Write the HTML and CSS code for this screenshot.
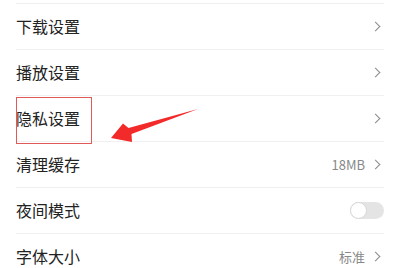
FILE: index.html
```html
<!DOCTYPE html>
<html lang="zh-CN">
<head>
    <meta charset="UTF-8">
    <meta name="viewport" content="width=device-width, initial-scale=1.0">
    <title>设置</title>
    <link rel="stylesheet" href="styles.css">
</head>
<body>
    <div class="settings">
        <div class="row">
            <span class="label">下载设置</span>
            <span class="chevron"></span>
        </div>
        <div class="row">
            <span class="label">播放设置</span>
            <span class="chevron"></span>
        </div>
        <div class="row">
            <span class="label">隐私设置</span>
            <span class="chevron"></span>
        </div>
        <div class="row">
            <span class="label">清理缓存</span>
            <span class="value">18MB</span>
            <span class="chevron"></span>
        </div>
        <div class="row">
            <span class="label">夜间模式</span>
            <span class="toggle"><span class="knob"></span></span>
        </div>
        <div class="row">
            <span class="label">字体大小</span>
            <span class="value">标准</span>
            <span class="chevron"></span>
        </div>
    </div>

    <!-- annotation: box + arrow over the privacy row -->
    <div class="mark-box"></div>
    <svg class="mark-arrow" width="400" height="268" viewBox="0 0 400 268">
        <polygon points="111,138 123,123.5 128.5,128 198,109 131.5,134 132,142" fill="#f22a2a"/>
    </svg>
</body>
</html>
```

FILE: styles.css
```css
body {
    margin: 0;
    padding: 0;
    background: #fff;
    font-family: "Noto Sans CJK SC", "Noto Sans", sans-serif;
    overflow: hidden;
    height: 268px;
    position: relative;
}
.settings {
    padding-top: 3px;
}
.row {
    display: flex;
    align-items: center;
    height: 45px;
    margin-left: 16px;
    margin-right: 16px;
    border-top: 1px solid #f0f0f0;
}
.label {
    flex: 1;
    font-size: 16px;
    color: #222;
    margin-top: -1px;
}
.value {
    font-size: 13px;
    color: #888;
    margin-right: 7px;
}
.chevron {
    width: 6px;
    height: 6px;
    border-top: 1.3px solid #8a8a8a;
    border-right: 1.3px solid #8a8a8a;
    transform: rotate(45deg);
    margin-right: 5px;
}
.toggle {
    width: 34px;
    height: 17px;
    border-radius: 9px;
    background: #e4e4e4;
    position: relative;
}
.knob {
    position: absolute;
    left: 0;
    top: 0;
    width: 15px;
    height: 15px;
    border-radius: 50%;
    background: #fff;
    border: 1px solid #d6d6d6;
}
.mark-box {
    position: absolute;
    left: 16px;
    top: 97px;
    width: 74px;
    height: 45px;
    border: 1.2px solid #e05a5a;
}
.mark-arrow {
    position: absolute;
    left: 0;
    top: 0;
}
```
